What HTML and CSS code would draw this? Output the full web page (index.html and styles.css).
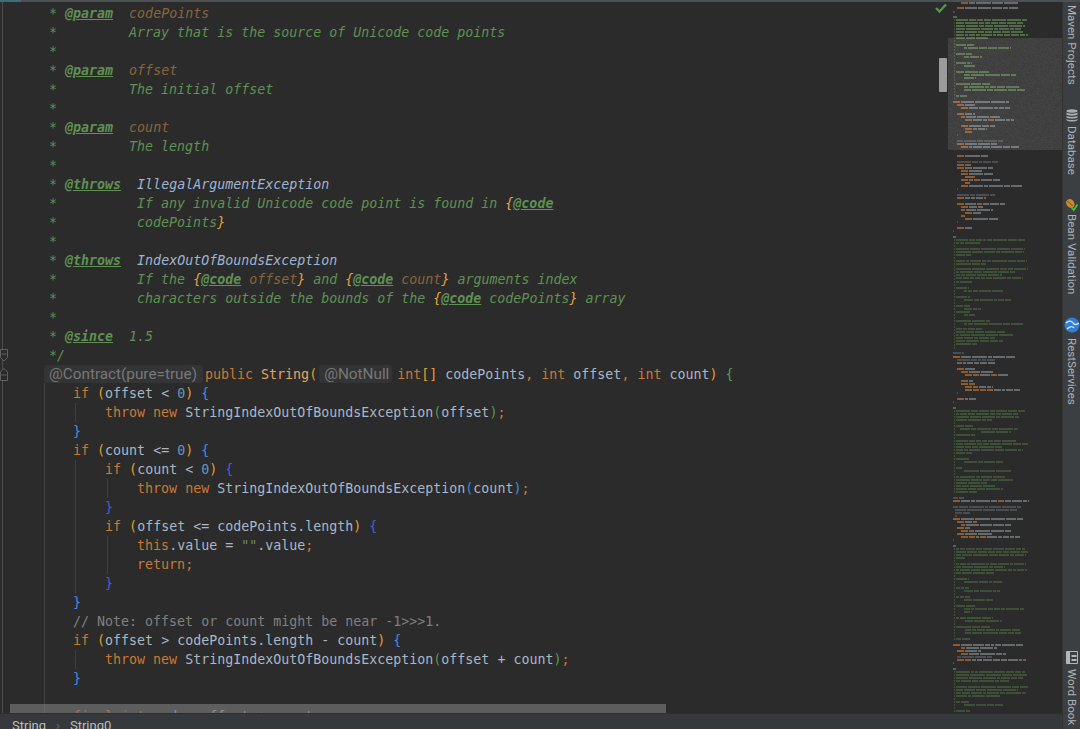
FILE: index.html
```html
<!DOCTYPE html>
<html lang="en">
<head>
<meta charset="utf-8">
<title>String.java</title>
<link rel="stylesheet" href="styles.css">
</head>
<body>
<div class="window">
  <div class="topbar"><div class="topbar-accent"></div></div>
  <div class="body">
    <main class="editor">
      <div class="gutter-line"></div>
      <svg class="fold fold-a" width="8" height="13" viewBox="0 0 8 13"><path d="M0.5 0.5H7.5V8.5L4 12L0.5 8.5ZM1.5 5H6.5" fill="#2b2b2b" stroke="#606060"/></svg>
      <svg class="fold fold-b" width="8" height="13" viewBox="0 0 8 13"><path d="M4 0.5L7.5 4V12.5H0.5V4ZM1.5 7H6.5" fill="#2b2b2b" stroke="#606060"/></svg>
      <div class="guide g-method"></div>
      <div class="guide g-if1"></div>
      <div class="guide g-if2"></div>
      <div class="guide g-if2b"></div>
      <div class="guide g-if2c"></div>
      <div class="guide g-if3"></div>
      <pre class="code"><div class="l d">     * <span class="t">@param</span>  <span class="p">codePoints</span></div><div class="l d">     *         Array that is the source of Unicode code points</div><div class="l d">     *</div><div class="l d">     * <span class="t">@param</span>  <span class="p">offset</span></div><div class="l d">     *         The initial offset</div><div class="l d">     *</div><div class="l d">     * <span class="t">@param</span>  <span class="p">count</span></div><div class="l d">     *         The length</div><div class="l d">     *</div><div class="l d">     * <span class="t">@throws</span>  <span class="r">IllegalArgumentException</span></div><div class="l d">     *          If any invalid Unicode code point is found in <span class="b">{</span><span class="t">@code</span></div><div class="l d">     *          codePoints<span class="b">}</span></div><div class="l d">     *</div><div class="l d">     * <span class="t">@throws</span>  <span class="r">IndexOutOfBoundsException</span></div><div class="l d">     *          If the <span class="b">{</span><span class="t">@code</span> <span class="p">offset</span><span class="b">}</span> and <span class="b">{</span><span class="t">@code</span> <span class="p">count</span><span class="b">}</span> arguments index</div><div class="l d">     *          characters outside the bounds of the <span class="b">{</span><span class="t">@code</span> codePoints<span class="b">}</span> array</div><div class="l d">     *</div><div class="l d">     * <span class="t">@since</span>  1.5</div><div class="l d">     */</div><div class="l">    <span class="hint hint-contract">@Contract(pure=true)</span><span class="k">public</span> <span class="s">String</span><span class="y">(</span><span class="hint hint-null">@NotNull</span><span class="k">int</span><span class="y">[]</span> codePoints<span class="k">,</span> <span class="k">int</span> offset<span class="k">,</span> <span class="k">int</span> count<span class="y">)</span> <span class="gr">{</span></div><div class="l">        <span class="k">if</span> <span class="y">(</span>offset &lt; <span class="n">0</span><span class="y">)</span> <span class="bl">{</span></div><div class="l">            <span class="k">throw new</span> StringIndexOutOfBoundsException<span class="gr">(</span>offset<span class="gr">)</span><span class="k">;</span></div><div class="l">        <span class="bl">}</span></div><div class="l">        <span class="k">if</span> <span class="y">(</span>count &lt;= <span class="n">0</span><span class="y">)</span> <span class="bl">{</span></div><div class="l">            <span class="k">if</span> <span class="y">(</span>count &lt; <span class="n">0</span><span class="y">)</span> <span class="bd">{</span></div><div class="l">                <span class="k">throw new</span> StringIndexOutOfBoundsException<span class="bl">(</span>count<span class="bl">)</span><span class="k">;</span></div><div class="l">            <span class="bd">}</span></div><div class="l">            <span class="k">if</span> <span class="y">(</span>offset &lt;= codePoints.length<span class="y">)</span> <span class="bd">{</span></div><div class="l">                <span class="k">this</span>.<span class="f">value</span> = <span class="str">""</span>.<span class="f">value</span><span class="k">;</span></div><div class="l">                <span class="k">return;</span></div><div class="l">            <span class="bd">}</span></div><div class="l">        <span class="bl">}</span></div><div class="l">        <span class="c">// Note: offset or count might be near -1&gt;&gt;&gt;1.</span></div><div class="l">        <span class="k">if</span> <span class="y">(</span>offset &gt; codePoints.length - count<span class="y">)</span> <span class="bl">{</span></div><div class="l">            <span class="k">throw new</span> StringIndexOutOfBoundsException<span class="gr">(</span>offset + count<span class="gr">)</span><span class="k">;</span></div><div class="l">        <span class="bl">}</span></div><div class="l"></div><div class="l">        <span class="k">final int</span> end = offset + count<span class="k">;</span></div></pre>
      <div class="hscroll"></div>
    </main>
    <div class="marks">
      <svg class="check" width="12" height="10" viewBox="0 0 12 10"><path d="M1 5L4.500 8.500L11 1.500" fill="none" stroke="#4f9a4a" stroke-width="2.400"/></svg>
      <div class="thumb"></div>
    </div>
    <canvas class="minimap" id="minimap" width="114" height="711"></canvas>
    <aside class="tools">
      <span class="tool">Maven Projects</span>
      <svg class="tool-icon db" width="12" height="13" viewBox="0 0 12 13"><g fill="#a8abad"><ellipse cx="6" cy="2" rx="5.500" ry="1.700"/><path d="M0.500 3.500C2 5 10 5 11.500 3.500V5.500C10 7 2 7 0.500 5.500Z"/><path d="M0.500 6.800C2 8.300 10 8.300 11.500 6.800V8.600C10 10 2 10 0.500 8.600Z"/><path d="M0.500 9.900C2 11.300 10 11.300 11.500 9.900V11C10 13 2 13 0.500 11Z"/></g></svg>
      <span class="tool tool-db">Database</span>
      <svg class="tool-icon bean" width="13" height="14" viewBox="0 0 13 14"><path d="M1 4C2 0.500 6 0 8 2.500C10 5 10 8 8 9.500C5 11 1 8 1 4Z" fill="#c98a2c"/><path d="M2.500 3L7.500 8" stroke="#6b4a1c" stroke-width="1"/><path d="M6.500 9.500L8.800 12L12.500 6.500" fill="none" stroke="#3fc23f" stroke-width="1.800"/></svg>
      <span class="tool tool-bean">Bean Validation</span>
      <svg class="tool-icon globe" width="16" height="16" viewBox="0 0 16 16"><circle cx="8" cy="8" r="7.500" fill="#2f7fd8"/><path d="M2 6C5 3 8 4 9 6C10 8 13 8 15 6M3 12C6 9 9 9 10 11" fill="none" stroke="#d4e6f7" stroke-width="1.300"/></svg>
      <span class="tool tool-rest">RestServices</span>
      <svg class="tool-icon book" width="12" height="13" viewBox="0 0 12 13"><path d="M0.500 0.500H11.500V12.500H0.500Z" fill="none" stroke="#b4b7b9"/><path d="M1 1H4V12H1ZM5.500 4H10.500V6H5.500ZM5.500 8H10.500V10H5.500Z" fill="#b4b7b9"/></svg>
      <span class="tool tool-word">Word Book</span>
    </aside>
  </div>
  <footer class="crumbs"><span>String</span><span class="sep">›</span><span>String0</span></footer>
</div>
<script src="minimap.js"></script>
</body>
</html>
```
FILE: styles.css
```css
html, body { margin: 0; padding: 0; height: 100%; background: #2b2b2b; overflow: hidden; }
.window { width: 1080px; height: 729px; display: flex; flex-direction: column; overflow: hidden; position: relative; }
.topbar { height: 2px; flex: none; background: #4b5052; }
.topbar-accent { width: 21px; height: 2px; background: #3b6f80; }
.body { flex: 1; min-height: 0; display: flex; }
.editor { position: relative; flex: 1; min-width: 0; overflow: hidden; background: #2b2b2b; }
.code { margin: 0; padding: 2px 0 0 9px; font: 13.3px/19px "DejaVu Sans Mono", monospace; color: #a9b7c6; white-space: pre; }
.l { height: 19px; }
.d { color: #5f9152; font-style: italic; }
.t { font-weight: bold; text-decoration: underline; }
.p { color: #8a653b; }
.r { color: #a0b4d0; }
.b { color: #e8a33d; }
.k { color: #cc7832; }
.s { color: #e5a55e; }
.y { color: #e0a030; }
.gr { color: #4f9e4f; }
.bl { color: #3d8fe8; }
.bd { color: #4a5ed0; }
.n { color: #6897bb; }
.str { color: #6a8759; }
.f { color: #a9b7c6; }
.c { color: #808080; }
.hint { display: inline-block; height: 18px; line-height: 18px; font-family: Roboto, sans-serif; font-size: 15.3px; color: #787878; background: #333435; border-radius: 3px; vertical-align: top; box-sizing: border-box; white-space: pre; overflow: hidden; }
.hint-contract { width: 159px; margin-left: 3px; margin-right: 2px; padding-left: 5px; }
.hint-null { width: 73px; margin-left: 2px; margin-right: 5px; padding-left: 5px; }
.gutter-line { position: absolute; left: 2px; top: 0; bottom: 0; width: 1px; background: #4c4c4c; }
.fold { position: absolute; left: 0; }
.fold-a { top: 347px; }
.fold-b { top: 366px; }
.guide { position: absolute; width: 1px; background: #3c4740; }
.g-method { left: 44px; top: 381px; bottom: 0; background: #3d483d; }
.g-if1 { left: 75px; top: 401px; height: 19px; background: #2f4358; }
.g-if2 { left: 75px; top: 458px; height: 134px; background: #2f4358; }
.g-if2b { left: 107px; top: 477px; height: 19px; background: #3a3f60; }
.g-if2c { left: 107px; top: 534px; height: 38px; background: #3a3f60; }
.g-if3 { left: 75px; top: 648px; height: 19px; background: #2f4358; }
.hscroll { position: absolute; left: 10px; top: 702px; width: 656px; height: 9px; background: rgba(125, 125, 125, 0.62); }
.marks { position: relative; flex: none; width: 9px; background: #2b2b2b; }
.check { position: absolute; left: -4px; top: 1px; }
.thumb { position: absolute; left: 0; top: 56px; width: 8px; height: 34px; background: #9b9b9b; border-radius: 1px; }
.minimap { flex: none; display: block; width: 114px; height: 711px; }
.tools { flex: none; width: 18px; box-sizing: border-box; padding-top: 3px; display: flex; flex-direction: column; align-items: center; background-color: #3c3f41; background-image: radial-gradient(#464a4c 0.6px, transparent 0.7px); background-size: 4px 4px; border-left: 1px solid #323232; height: 727px; position: relative; z-index: 2; }
.tool { writing-mode: vertical-rl; font: 11.6px/16px Roboto, sans-serif; color: #aeb3b8; white-space: nowrap; flex: none; }
.tool-icon { flex: none; display: block; }
.db { margin-top: 24px; }
.tool-db { margin-top: 4px; }
.bean { margin-top: 23px; }
.tool-bean { margin-top: 2px; }
.globe { margin-top: 23px; }
.tool-rest { margin-top: 5px; }
.book { margin-top: auto; }
.tool-word { margin-top: 5px; margin-bottom: 4px; }
.crumbs { position: absolute; left: 0; right: 18px; bottom: 0; height: 16px; box-sizing: border-box; padding-left: 12px; background: #36393b; border-top: 1px solid #2e2e2e; display: flex; gap: 8px; font: 13px/24px Roboto, sans-serif; color: #b9bcbe; overflow: hidden; }
.sep { color: #6a6d70; margin: 0 2px; }
```
FILE: minimap.js
```js
(function () {
  var cv = document.getElementById('minimap');
  var g = cv.getContext('2d');
  var OX = 948, OY = 2;
  var seed = 12345;
  function rnd() { seed = (seed * 1103515245 + 12345) & 0x7fffffff; return seed / 0x7fffffff; }
  var COL = { c: '#526b47', d: '#3f5039', k: '#666b6e', g: '#4b4e50' };
  var rows = [
    [2,961,1018,'k'],[7,957,1018,'k'],[11,953,955,'g'],[16,953,957,'c'],
    [19,956,1027,'c'],[22,956,1023,'c'],[25,956,1025,'c'],[28,956,1021,'c'],[31,956,1023,'c'],[34,956,1028,'c'],[37,956,988,'c'],
    [44,956,974,'c'],[47,964,1011,'c'],[53,956,972,'c'],[56,964,982,'c'],[62,956,972,'c'],[65,964,975,'c'],
    [71,956,989,'c'],[74,964,1017,'c'],[77,964,976,'c'],[83,956,990,'c'],[86,964,1020,'c'],[89,964,1026,'c'],[95,956,967,'c'],
    [101,953,1009,'k'],[104,957,975,'k'],[107,961,1010,'k'],[113,957,975,'k'],[116,961,1000,'k'],[119,965,1014,'k'],
    [125,961,995,'k'],[128,965,987,'k'],[131,965,972,'o'],[134,957,958,'g'],[140,957,1003,'g'],[143,957,997,'k'],[146,961,1019,'k'],
    [155,957,988,'k'],[161,957,998,'g'],[164,957,971,'k'],[167,957,993,'k'],[170,961,983,'k'],[173,961,993,'k'],[176,965,975,'o'],
    [179,961,1000,'k'],[182,965,970,'k'],[185,961,1022,'k'],[188,957,958,'g'],[194,957,995,'g'],[197,957,986,'k'],
    [203,957,1005,'k'],[206,961,983,'k'],[209,961,993,'k'],[212,965,981,'k'],[215,961,965,'o'],[218,965,999,'k'],[221,957,958,'g'],
    [227,957,972,'k'],[230,953,954,'g'],[236,953,956,'c'],
    [239,956,1026,'d'],[242,956,980,'d'],[248,956,1025,'d'],[251,956,1024,'d'],[254,956,971,'d'],[260,956,1027,'d'],[263,956,986,'d'],
    [268,956,1028,'d'],[271,956,1015,'d'],[274,956,1002,'d'],[277,956,1023,'d'],[281,956,972,'d'],
    [287,956,969,'d'],[290,964,1003,'d'],[296,956,970,'d'],[299,964,1011,'d'],[305,956,970,'d'],[308,964,982,'d'],[311,956,970,'d'],[314,964,975,'d'],
    [320,956,990,'d'],[323,964,1023,'d'],[328,956,982,'d'],[331,956,1005,'d'],[334,956,1013,'d'],[337,956,995,'d'],[340,956,1003,'d'],[343,956,977,'d'],
    [352,953,964,'g'],[356,953,1016,'k'],[359,957,995,'g'],[362,957,995,'k'],[368,957,975,'k'],[371,961,993,'k'],[374,965,1008,'k'],
    [380,961,973,'k'],[383,961,975,'k'],[386,965,993,'k'],[389,965,1020,'k'],[392,957,958,'g'],[398,957,976,'k'],[401,953,954,'g'],
    [407,953,956,'c'],[410,956,1025,'d'],[413,956,1018,'d'],[416,956,1020,'d'],[419,956,992,'d'],[425,956,973,'d'],[428,960,1018,'d'],[431,981,1011,'d'],[434,956,975,'d'],
    [440,956,1017,'d'],[443,956,1028,'d'],[446,956,1002,'d'],[449,956,1023,'d'],[452,956,972,'d'],[458,956,969,'d'],[461,964,1003,'d'],[467,956,962,'d'],[470,964,1011,'d'],
    [476,956,1005,'d'],[479,956,1013,'d'],[482,956,987,'d'],[485,956,995,'d'],[488,956,1003,'d'],[491,956,977,'d'],
    [497,953,964,'g'],[500,953,1029,'k'],[506,953,1021,'g'],[509,955,1018,'g'],[512,955,970,'g'],[515,955,957,'g'],
    [518,953,1023,'k'],[521,957,977,'k'],[524,961,1011,'k'],[527,957,971,'k'],[530,961,1011,'k'],[533,957,992,'k'],[536,961,1020,'k'],[539,953,954,'g'],
    [545,953,956,'c'],[548,956,1025,'d'],[551,956,1028,'d'],[554,956,1026,'d'],[557,956,965,'d'],[563,956,1026,'d'],[566,956,1005,'d'],[569,956,1027,'d'],[572,956,994,'d'],
    [578,956,969,'d'],[581,964,1003,'d'],[587,956,970,'d'],[590,964,1001,'d'],[596,956,970,'d'],[599,964,993,'d'],
    [605,956,975,'d'],[608,964,1024,'d'],[611,964,972,'d'],[617,956,993,'d'],[620,965,1002,'d'],[626,956,990,'d'],[629,965,1020,'d'],[632,965,1021,'d'],[638,956,970,'d'],
    [644,953,1024,'k'],[647,961,997,'k'],[650,957,981,'k'],[653,961,1006,'k'],[656,957,992,'g'],[659,957,1026,'k'],[662,953,954,'g'],
    [668,953,956,'c'],[671,956,1025,'d'],[674,956,1028,'d'],[677,956,1023,'d'],[680,956,1009,'d'],[686,956,1028,'d'],[689,956,1018,'d'],[692,956,1026,'d'],[695,956,1000,'d'],
    [701,956,969,'d'],[704,964,1003,'d'],[710,956,970,'d']
  ];
  function put(x, y, w, col) { g.fillStyle = col; g.fillRect(x - OX, y - OY, w, 2); }
  [[16,98],[236,350],[407,494],[545,641],[668,713]].forEach(function (r) {
    for (var y = r[0]; y < r[1]; y += 3) { g.fillStyle = '#3f5339'; g.fillRect(954 - OX, y - OY, 1, 2); }
  });
  rows.forEach(function (r) {
    var x = r[1], end = r[2], kind = r[3], first = true;
    while (x < end) {
      var w = Math.min(end - x, 3 + Math.floor(rnd() * 13));
      var col = COL[kind] || '#8f5a30';
      if (kind === 'k' && first) { col = '#8f5a30'; w = Math.min(w, 7); }
      else if (kind === 'k' && rnd() < 0.1) { col = '#8f5a30'; w = Math.min(w, 6); }
      put(x, r[0], w, col);
      x += w + 1;
      first = false;
    }
  });
  for (var y = 38; y < 150; y++) {
    for (var x = 948; x < 1062; x++) {
      g.fillStyle = rnd() < 0.5 ? 'rgba(255,255,255,0.09)' : 'rgba(255,255,255,0.115)';
      g.fillRect(x - OX, y - OY, 1, 1);
    }
  }
}());
```
